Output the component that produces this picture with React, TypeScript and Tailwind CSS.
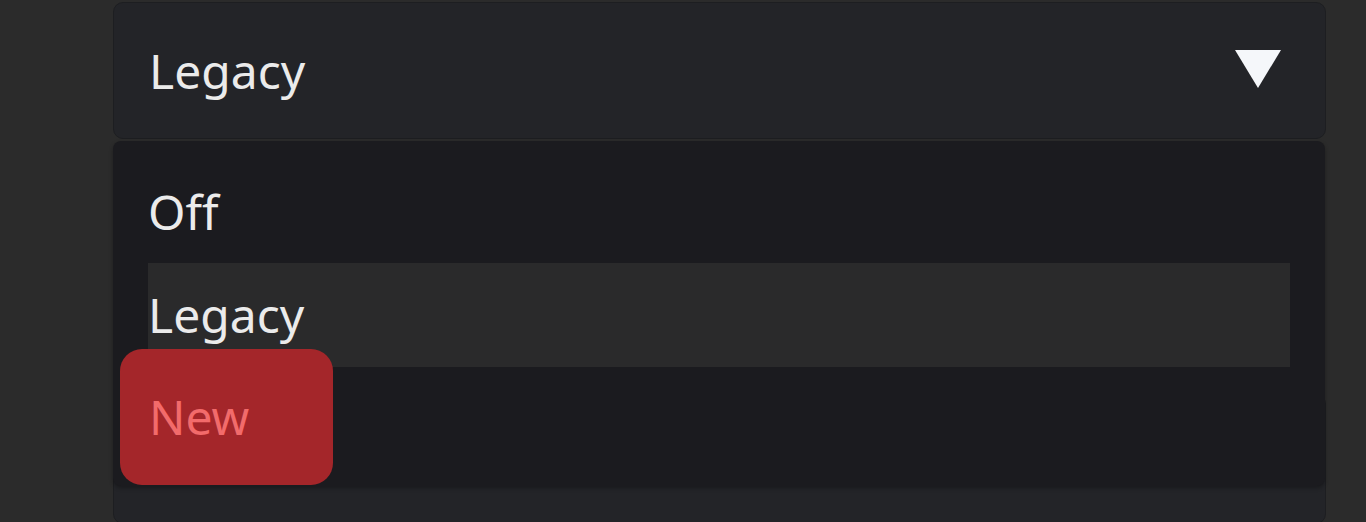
import React from "react";

const font = { fontFamily: '"Noto Sans", "Open Sans", sans-serif' };

export default function App() {
  return (
    <div
      className="relative h-[522px] w-[1366px] overflow-hidden bg-[#2b2b2b]"
      style={font}
    >
      <div className="flex flex-col pl-[113px] pr-[40px] pt-[2px]">
        <div className="flex h-[137px] items-center justify-between rounded-[10px] border border-[#1d1e21] bg-[#232428] pl-[35px] pr-[43px]">
          <span className="text-[48px] leading-none text-[#ebebeb]">Legacy</span>
          <svg width="48" height="40" viewBox="0 0 48 40" className="mt-[-4px]">
            <polygon points="1,1 47,1 24,39" fill="#f5f7fa" />
          </svg>
        </div>
        <div className="mt-[255px] h-[130px] rounded-[10px] border border-[#1d1e21] bg-[#232428]" />
      </div>

      <div className="absolute left-[113px] top-[141px] h-[345px] w-[1212px] rounded-[8px] bg-[#1b1b1f] px-[35px] pt-[20px] shadow-[0_2px_4px_rgba(0,0,0,0.3)]">
        <div className="flex h-[102px] items-center text-[48px] leading-none text-[#ebebeb]">
          Off
        </div>
        <div className="flex h-[104px] items-center bg-[#2a2a2b] text-[48px] leading-none text-[#ebebeb]">
          Legacy
        </div>
        <div className="h-[104px]" />
        <div className="absolute left-[7px] top-[208px] flex h-[136px] w-[213px] items-center rounded-[22px] bg-[#a4262a] pl-[29px] text-[48px] leading-none text-[#f26b6b]">
          New
        </div>
      </div>
    </div>
  );
}
